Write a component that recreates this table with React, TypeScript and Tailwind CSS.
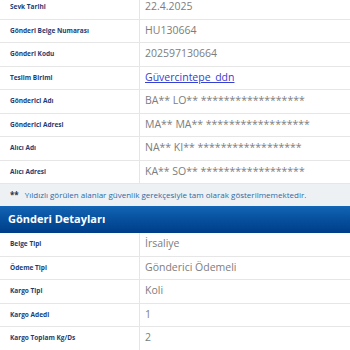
import React from "react";

type Row = { label: string; value: string; link?: boolean };

const topRows: Row[] = [
  { label: "Sevk Tarihi", value: "22.4.2025" },
  { label: "Gönderi Belge Numarası", value: "HU130664" },
  { label: "Gönderi Kodu", value: "202597130664" },
  { label: "Teslim Birimi", value: "Güvercintepe_ddn", link: true },
  { label: "Gönderici Adı", value: "BA** LO** ******************" },
  { label: "Gönderici Adresi", value: "MA** MA** ******************" },
  { label: "Alıcı Adı", value: "NA** KI** ******************" },
  { label: "Alıcı Adresi", value: "KA** SO** ******************" },
];

const detailRows: Row[] = [
  { label: "Belge Tipi", value: "İrsaliye" },
  { label: "Ödeme Tipi", value: "Gönderici Ödemeli" },
  { label: "Kargo Tipi", value: "Koli" },
  { label: "Kargo Adedi", value: "1" },
  { label: "Kargo Toplam Kg/Ds", value: "2" },
];

function InfoRow({ label, value, link }: Row) {
  return (
    <div className="flex h-[23.5px] border-b border-[#e6e6e6]">
      <div className="flex w-[140px] shrink-0 items-center border-r border-[#e6e6e6] pl-[10px] text-[6.5px] font-bold text-[#1d3d72]">
        {label}
      </div>
      <div className="flex items-center pl-[5px] text-[10.5px] text-[#7d7d7d]">
        {link ? (
          <span className="text-[#3440d0] underline">{value}</span>
        ) : (
          value
        )}
      </div>
    </div>
  );
}

export default function App() {
  return (
    <div
      className="h-[350px] w-[350px] overflow-hidden bg-white"
      style={{ fontFamily: '"Open Sans", "Noto Sans", sans-serif' }}
    >
      <div className="-mt-[4px]">
        {topRows.map((r) => (
          <InfoRow key={r.label} {...r} />
        ))}
      </div>

      <div className="flex h-[22px] items-center gap-[6px] bg-[#eef1f4] pl-[10px] text-[8px]">
        <span className="font-bold text-[#2a3550]">**</span>
        <span className="text-[#2d6aa6]">
          Yıldızlı görülen alanlar güvenlik gerekçesiyle tam olarak gösterilmemektedir.
        </span>
      </div>

      <div className="flex h-[27px] items-center bg-gradient-to-b from-[#1264b4] to-[#003d88] pl-[8px] text-[11px] font-bold text-white">
        Gönderi Detayları
      </div>

      <div>
        {detailRows.map((r) => (
          <InfoRow key={r.label} {...r} />
        ))}
      </div>
    </div>
  );
}
